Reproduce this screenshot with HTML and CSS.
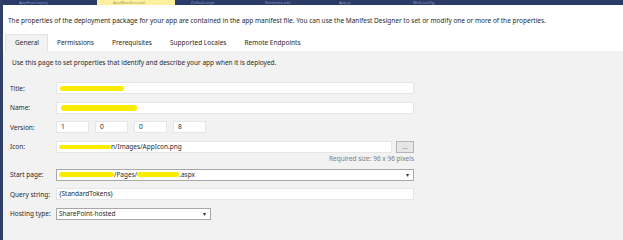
FILE: index.html
```html
<!DOCTYPE html>
<html lang="en">
<head>
  <meta charset="UTF-8">
  <title>AppManifest.xml</title>
  <link rel="stylesheet" href="styles.css">
</head>
<body>

  <div class="doc-tabs">
    <span class="doc-tab">AppHost.csproj</span>
    <span class="doc-tab active">AppManifest.xml</span>
    <span class="doc-tab">Default.aspx</span>
    <span class="doc-tab">Elements.xml</span>
    <span class="doc-tab">App.js</span>
    <span class="doc-tab">Web.config</span>
  </div>

  <p class="intro">The properties of the deployment package for your app are contained in the app manifest file. You can use the Manifest Designer to set or modify one or more of the properties.</p>

  <div class="tabs">
    <span class="tab selected">General</span>
    <span class="tab">Permissions</span>
    <span class="tab">Prerequisites</span>
    <span class="tab">Supported Locales</span>
    <span class="tab">Remote Endpoints</span>
  </div>

  <div class="panel">
    <p class="hint">Use this page to set properties that identify and describe your app when it is deployed.</p>

    <div class="form">
      <div class="row">
        <label>Title:</label>
        <div class="field wide"><span class="marker m-title"></span></div>
      </div>
      <div class="row">
        <label>Name:</label>
        <div class="field wide"><span class="marker m-name"></span></div>
      </div>
      <div class="row">
        <label>Version:</label>
        <div class="version">
          <div class="field small">1</div>
          <div class="field small">0</div>
          <div class="field small">0</div>
          <div class="field small">8</div>
        </div>
      </div>
      <div class="row icon-row">
        <label>Icon:</label>
        <div class="icon-group">
          <div class="icon-line">
            <div class="field grow"><span class="marker m-icon"></span>n/Images/AppIcon.png</div>
            <button class="browse">...</button>
          </div>
          <div class="note">Required size: 96 x 96 pixels</div>
        </div>
      </div>
      <div class="row">
        <label>Start page:</label>
        <div class="field wide select"><span class="marker m-start1"></span>/Pages/<span class="marker m-start2"></span>.aspx<span class="arrow">▾</span></div>
      </div>
      <div class="row">
        <label>Query string:</label>
        <div class="field wide">{StandardTokens}</div>
      </div>
      <div class="row">
        <label>Hosting type:</label>
        <div class="field hosting select">SharePoint-hosted<span class="arrow">▾</span></div>
      </div>
    </div>
  </div>

</body>
</html>
```

FILE: styles.css
```css
body {
  margin: 0;
  font-family: 'Noto Sans', sans-serif;
  font-size: 6.5px;
  color: #2a2a2a;
  background: #fff;
  border-left: 3px solid #2f3f66;
  height: 240px;
  overflow: hidden;
  box-sizing: border-box;
  display: flex;
  flex-direction: column;
}

.doc-tabs {
  display: flex;
  flex: none;
  height: 5px;
  background: #2b3b68;
  font-size: 4px;
  line-height: 5px;
  color: #8797c0;
}

.doc-tab {
  width: 74px;
  padding-left: 16px;
  box-sizing: border-box;
  white-space: nowrap;
}

.doc-tab.active {
  background: #fdf1a0;
  color: #a8995a;
  margin-left: 20px;
  width: 78px;
}

.intro {
  flex: none;
  margin: 0;
  padding: 11px 0 0 5px;
  line-height: 10px;
  height: 18px;
}

.tabs {
  display: flex;
  flex: none;
  padding-left: 2px;
  height: 17px;
}

.tab {
  padding: 0 9px;
  line-height: 17px;
}

.tab.selected {
  background: #f2f2f2;
  border: 1px solid #e2e2e2;
  border-bottom: none;
  line-height: 16px;
  padding: 0 8px 0 9px;
}

.panel {
  flex: 1;
  background: #f2f2f2;
  padding: 7px 0 0 7px;
}

.hint {
  margin: 0 0 0 2px;
  line-height: 9px;
  height: 24px;
}

.form {
  display: flex;
  flex-direction: column;
}

.row {
  display: flex;
  align-items: center;
  height: 12px;
  margin-bottom: 7.5px;
}

.row label {
  width: 46px;
  flex: none;
}

.field {
  position: relative;
  height: 12px;
  box-sizing: border-box;
  background: #fff;
  border: 1px solid #e6e6e6;
  line-height: 10px;
  padding-left: 2px;
  white-space: nowrap;
  overflow: hidden;
}

.wide { width: 358px; }

.version {
  display: flex;
  gap: 6px;
}

.small {
  width: 33px;
  padding-left: 4px;
}

.icon-row {
  height: auto;
  align-items: flex-start;
  margin-bottom: 7px;
}

.icon-row label { line-height: 12px; }

.icon-group {
  display: flex;
  flex-direction: column;
  width: 358px;
}

.icon-line {
  display: flex;
  gap: 4px;
}

.grow { flex: 1; }

.browse {
  width: 18px;
  height: 12px;
  padding: 0;
  border: 1px solid #b5b5b5;
  background: #e6e6e6;
  font-size: 6px;
  line-height: 6px;
  color: #444;
  font-family: inherit;
}

.note {
  text-align: right;
  color: #808080;
  line-height: 7px;
  margin-top: 2px;
  font-size: 6.5px;
}

.select {
  border-color: #a8a8a8;
}

.hosting { width: 155px; }

.arrow {
  position: absolute;
  right: 4px;
  top: 0;
  font-size: 6px;
  color: #333;
}

.marker {
  display: inline-block;
  height: 5px;
  background: #f9ec00;
  border-radius: 3px;
  vertical-align: middle;
}

.m-title { width: 64px; margin-left: 1px; }
.m-name { width: 76px; height: 6px; margin-left: 2px; }
.m-icon { width: 52px; height: 4px; }
.m-start1 { width: 55px; }
.m-start2 { width: 42px; }
```
